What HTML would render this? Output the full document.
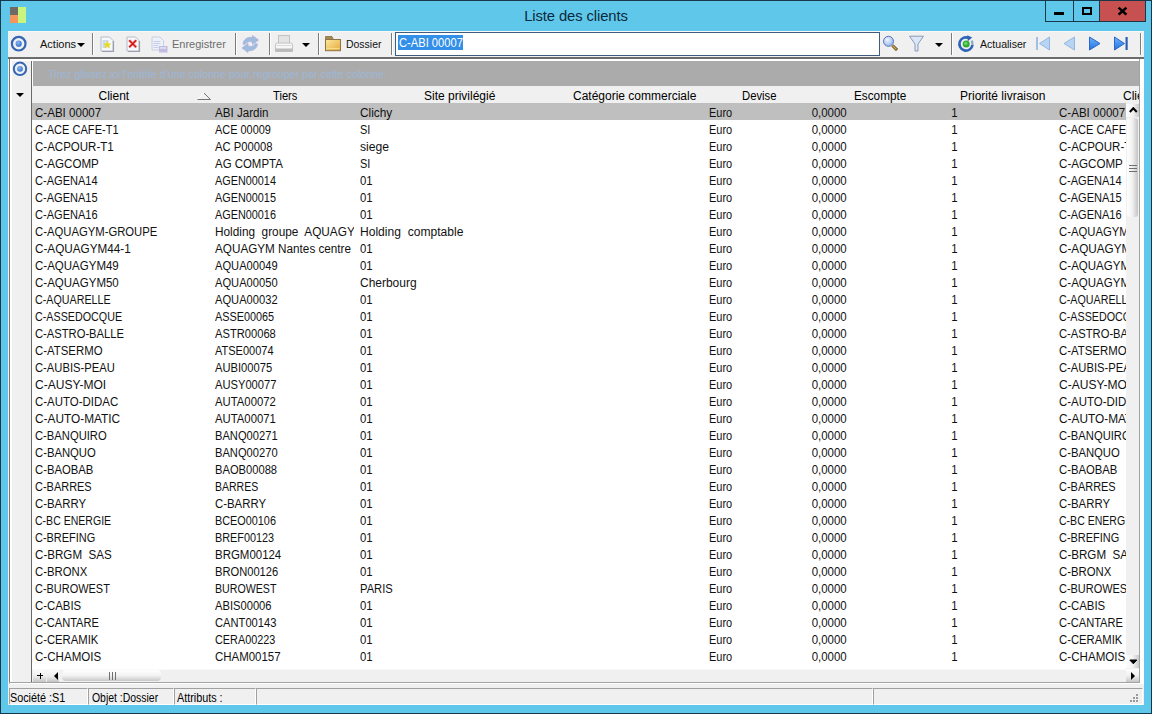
<!DOCTYPE html>
<html><head><meta charset="utf-8"><title>Liste des clients</title>
<style>
*{margin:0;padding:0;box-sizing:border-box}
html,body{width:1152px;height:714px;overflow:hidden}
body{background:#17384b;font-family:"Liberation Sans",sans-serif;position:relative;color:#000}
.abs{position:absolute}
#frame{position:absolute;left:1px;top:1px;width:1150px;height:712px;background:#5fc7ea}
#title{position:absolute;left:0;top:6px;width:1152px;text-align:center;font-size:14.8px;color:#0b2a3b;line-height:20px;letter-spacing:-0.1px}
.tb{position:absolute;top:1px;height:21px;border-left:1px solid #17384b;border-bottom:1px solid #17384b}
#client{position:absolute;left:8px;top:31px;width:1136px;height:674px;background:#f0f0f0}
#toolbar{position:absolute;left:8px;top:31px;width:1136px;height:26px;background:#f0f0f0;border-top:1px solid #f8f8f8}
.sep{position:absolute;top:33px;width:2px;height:22px;background:linear-gradient(90deg,#7c7c7c 50%,#fff 50%)}
.tt{position:absolute;top:36px;font-size:11px;line-height:16px;color:#111;white-space:pre}
.dd{position:absolute;width:0;height:0;border-left:4px solid transparent;border-right:4px solid transparent;border-top:4px solid #000}
#gridbox{position:absolute;left:9px;top:59px;width:1135px;height:625px;border-left:1px solid #777;border-bottom:1px solid #fff;background:#fff}
#leftpan{position:absolute;left:12px;top:61px;width:19px;height:622px;background:#f0f0f0}
#leftline{position:absolute;left:31px;top:61px;width:1px;height:622px;background:#6a6a6a}
#group{position:absolute;left:33px;top:61px;width:1106px;height:25px;background:#ababab}
#grouptext{position:absolute;left:48px;top:66px;font-size:11px;line-height:16px;color:#a0b4ce;white-space:pre;transform:scaleX(.968);transform-origin:left top;letter-spacing:0;text-shadow:0 0 .6px #a4b6cc}
#header{position:absolute;left:32px;top:86px;width:1108px;height:17px;background:#f0f0f0}
.h{position:absolute;top:88px;font-size:12px;line-height:17px;white-space:pre;color:#000}
.row{position:absolute;left:32px;width:1094px;height:17px;background:#fff}
.row.sel{background:#bfbfbf}
.cl{position:absolute;top:0;height:17px;overflow:hidden}
.cl span{position:absolute;left:0;top:2px;font-size:12px;line-height:16px;white-space:pre;color:#111;transform-origin:left top}
.cl span.r{left:auto;right:0;transform-origin:right top}
.clip2{position:absolute;overflow:hidden}
#vscroll{position:absolute;left:1126px;top:103px;width:14px;height:566px;background:#e9e9e9}
#hscroll{position:absolute;left:32px;top:669px;width:1108px;height:14px;background:#e9e9e9}
#status{position:absolute;left:8px;top:687px;width:1136px;height:18px;background:#f0f0f0}
.seg{position:absolute;top:688px;height:17px;border-top:1px solid #a0a0a0;border-left:1px solid #a0a0a0;border-right:1px solid #fff;border-bottom:1px solid #fff}
.st{position:absolute;top:691px;font-size:12px;line-height:15px;color:#000;white-space:pre}

</style></head><body>
<div id="frame"></div>
<!-- app icon -->
<div class="abs" style="left:10px;top:7px;width:8px;height:8px;background:#6f6a66"></div>
<div class="abs" style="left:10px;top:15px;width:8px;height:8px;background:#f5955a"></div>
<div class="abs" style="left:18px;top:7px;width:8px;height:16px;background:#c9f47e"></div>
<div id="title">Liste des clients</div>
<!-- title buttons -->
<div class="tb" style="left:1045px;width:28px;"></div>
<div class="tb" style="left:1073px;width:26px;"></div>
<div class="tb" style="left:1099px;width:47px;background:#c75050;border-right:1px solid #17384b"></div>
<div class="abs" style="left:1054px;top:12px;width:10px;height:3px;background:#000"></div>
<div class="abs" style="left:1082px;top:7px;width:10px;height:8px;border:2px solid #000"></div>
<svg class="abs" style="left:1117px;top:6px" width="11" height="10" viewBox="0 0 11 10"><path d="M1.6 1.6 L9.4 8.6 M9.4 1.6 L1.6 8.6" stroke="#000" stroke-width="2.6"/></svg>

<div id="client"></div>
<div id="toolbar"></div>
<!-- toolbar circle -->
<svg class="abs" style="left:10px;top:35px" width="18" height="18" viewBox="0 0 18 18"><defs><radialGradient id="dg" cx=".4" cy=".35" r=".7"><stop offset="0" stop-color="#8ab8f4"/><stop offset="1" stop-color="#2f6cc8"/></radialGradient></defs><circle cx="8.7" cy="8.7" r="6.8" fill="none" stroke="#3566b4" stroke-width="2.2"/><circle cx="8.7" cy="8.7" r="3.1" fill="url(#dg)"/></svg>
<div class="tt" style="left:40px">Actions</div>
<div class="dd" style="left:77px;top:43px"></div>
<div class="sep" style="left:92px"></div>
<!-- new icon -->
<svg class="abs" style="left:100px;top:36px" width="16" height="17" viewBox="0 0 16 17"><path d="M1 1 H9.5 L13 4.5 V15 H1 Z" fill="#f6f8fc" stroke="#b4bcc8" stroke-width="1"/><path d="M2 15.5 H13.5 V5" fill="none" stroke="#9aa1aa" stroke-width="1.2"/><path d="M2.5 5h6M2.5 7h3M2.5 9h3M2.5 11h3" stroke="#a6bce2" stroke-width="1"/><path d="M7.2 5.2 L8.3 7.6 L10.8 7.9 L8.9 9.6 L9.5 12.1 L7.2 10.8 L4.9 12.1 L5.5 9.6 L3.6 7.9 L6.1 7.6 Z" fill="#e6de1c" stroke="#d8cc30" stroke-width=".4"/></svg>
<!-- delete icon -->
<svg class="abs" style="left:126px;top:36px" width="16" height="17" viewBox="0 0 16 17"><path d="M1 1 H9.5 L13 4.5 V15 H1 Z" fill="#f6f8fc" stroke="#b4bcc8" stroke-width="1"/><path d="M2 15.5 H13.5 V5" fill="none" stroke="#9aa1aa" stroke-width="1.2"/><path d="M3.2 4.2 L10.2 11.2 M10.2 4.2 L3.2 11.2" stroke="#f4a8a8" stroke-width="3"/><path d="M3.2 4.2 L10.2 11.2 M10.2 4.2 L3.2 11.2" stroke="#d41010" stroke-width="1.5"/></svg>
<!-- save icon (disabled) -->
<svg class="abs" style="left:151px;top:36px" width="18" height="17" viewBox="0 0 18 17"><path d="M1 1 H9 L12.5 4.5 V14 H1 Z" fill="#eef1fa" stroke="#c8cde0" stroke-width="1"/><path d="M2.5 5.5h7M2.5 7.5h7M2.5 9.5h5M2.5 11.5h5" stroke="#c6cfea" stroke-width="1"/><rect x="8" y="10" width="8.5" height="6.5" fill="#c0bce2"/><rect x="9" y="11" width="6" height="2" fill="#dcdaf0"/></svg>
<div class="tt" style="left:172px;color:#6d6d6d">Enregistrer</div>
<div class="sep" style="left:235px"></div>
<!-- refresh disabled -->
<svg class="abs" style="left:241px;top:35px" width="19" height="18" viewBox="0 0 19 18"><path d="M2 9 C2.5 4.5 6.5 1.5 11.5 2.5 L11.5 0.5 L17.5 5 L11.5 9.5 L11.5 7 C8 6 5.5 7 4 9.5 Z" fill="#9fbbdd" stroke="#aeb0dc" stroke-width=".8"/><path d="M16.5 9 C16 13.5 12 16.5 7 15.5 L7 17.5 L1 13 L7 8.5 L7 11 C10.5 12 13 11 14.5 8.5 Z" fill="#9fbbdd" stroke="#aeb0dc" stroke-width=".8"/></svg>
<div class="sep" style="left:269px"></div>
<!-- printer disabled -->
<svg class="abs" style="left:274px;top:34px" width="20" height="19" viewBox="0 0 20 19"><rect x="4.5" y="1.5" width="11" height="9" fill="#e4e4e4" stroke="#c2c2c2"/><path d="M1.5 11 Q1.5 9 3.5 9 H16.5 Q18.5 9 18.5 11 V17.5 H1.5 Z" fill="#f7f7f7" stroke="#c2c2c2"/><rect x="1.5" y="14.5" width="17" height="3" fill="#b9b9b9"/><rect x="3" y="11" width="14" height="1" fill="#dadada"/></svg>
<div class="dd" style="left:302px;top:43px"></div>
<div class="sep" style="left:318px"></div>
<!-- folder -->
<svg class="abs" style="left:324px;top:35px" width="18" height="17" viewBox="0 0 18 17"><defs><linearGradient id="fg" x1="0" y1="0" x2="1" y2="1"><stop offset="0" stop-color="#fbe9a0"/><stop offset="1" stop-color="#e6a838"/></linearGradient></defs><path d="M1.5 1.5 H8 L9 3.5 V5 H1.5 Z" fill="#a48a56" stroke="#8a7040" stroke-width=".8"/><rect x="1.5" y="4.5" width="15" height="11.2" fill="url(#fg)" stroke="#8d7343" stroke-width="1"/><path d="M2.5 13.5 H15.5" stroke="#f3dc90" stroke-width="1"/></svg>
<div class="tt" style="left:346px;transform:scaleX(.95);transform-origin:left top">Dossier</div>
<div class="sep" style="left:391px"></div>
<!-- search box -->
<div class="abs" style="left:395px;top:32px;width:485px;height:24px;background:#fff;border:1px solid #3e5d7e"></div>
<div class="abs" style="left:398px;top:35px;width:65px;height:15px;background:#3390e9"></div>
<div class="abs" style="left:399px;top:36px;font-size:12px;line-height:15px;color:#fff;white-space:pre;transform:scaleX(.93);transform-origin:left top">C-ABI 00007</div>
<!-- magnifier -->
<svg class="abs" style="left:882px;top:35px" width="18" height="17" viewBox="0 0 18 17"><defs><radialGradient id="lg" cx=".4" cy=".35" r=".7"><stop offset="0" stop-color="#f0f6ff"/><stop offset="1" stop-color="#90b4ee"/></radialGradient></defs><path d="M10.5 10.5 L15 15" stroke="#4a3a10" stroke-width="3"/><path d="M10.5 10.5 L14.5 14.5" stroke="#d6a84a" stroke-width="1.6"/><circle cx="6.5" cy="6.3" r="5" fill="url(#lg)" stroke="#5a74b4" stroke-width="1"/></svg>
<!-- funnel -->
<svg class="abs" style="left:908px;top:35px" width="17" height="17" viewBox="0 0 17 17"><path d="M1.5 1.2 H15.5 L10 9 V16 H7 V9 Z" fill="#dbe6f8" stroke="#8c9bb6" stroke-width="1"/></svg>
<div class="dd" style="left:935px;top:43px"></div>
<div class="sep" style="left:951px"></div>
<!-- green refresh -->
<svg class="abs" style="left:956px;top:34px" width="20" height="20" viewBox="0 0 20 20"><path d="M12.6 3.9 A6.6 6.6 0 1 0 16.5 11" fill="none" stroke="#2f63b8" stroke-width="2.6"/><path d="M16.5 11 A6.6 6.6 0 0 0 15.6 6.6" fill="none" stroke="#8aa6c8" stroke-width="2.2"/><path d="M11.2 1.2 L16.2 3.6 L11.8 7.2 Z" fill="#2f63b8"/><circle cx="10.2" cy="10" r="3.5" fill="#33aa33"/><circle cx="9.8" cy="9.4" r="1.7" fill="#66d866"/></svg>
<div class="tt" style="left:980px;transform:scaleX(.96);transform-origin:left top">Actualiser</div>
<!-- nav arrows -->
<svg class="abs" style="left:1035px;top:36px" width="16" height="15" viewBox="0 0 16 15"><rect x="1" y="1" width="2" height="13" fill="#9fbfe6"/><path d="M14.5 1 V14 L4.5 7.5 Z" fill="#b8d4f2" stroke="#93b6e2" stroke-width="1"/></svg>
<svg class="abs" style="left:1062px;top:36px" width="14" height="15" viewBox="0 0 14 15"><path d="M12.5 1 V14 L2 7.5 Z" fill="#b8d4f2" stroke="#93b6e2" stroke-width="1"/></svg>
<svg class="abs" style="left:1088px;top:36px" width="14" height="15" viewBox="0 0 14 15"><defs><linearGradient id="ag" x1="0" y1="0" x2="0" y2="1"><stop offset="0" stop-color="#6cb4ff"/><stop offset="1" stop-color="#1f74e0"/></linearGradient></defs><path d="M1.5 1 V14 L12 7.5 Z" fill="url(#ag)" stroke="#2a66c8" stroke-width="1"/></svg>
<svg class="abs" style="left:1113px;top:36px" width="16" height="15" viewBox="0 0 16 15"><path d="M1.5 1 V14 L11.5 7.5 Z" fill="url(#ag)" stroke="#2a66c8" stroke-width="1"/><rect x="12.5" y="1" width="2.2" height="13" fill="#2a5fb8"/></svg>
<div class="sep" style="left:1140px"></div>
<!-- toolbar bottom edge -->
<div class="abs" style="left:8px;top:57px;width:1136px;height:2px;background:#6c6c6c"></div>

<!-- grid -->
<div id="gridbox"></div>
<div id="leftpan"></div>
<div id="leftline"></div>
<svg class="abs" style="left:12px;top:61px" width="16" height="16" viewBox="0 0 16 16"><circle cx="8" cy="7.8" r="6.2" fill="none" stroke="#3566b4" stroke-width="2"/><circle cx="8" cy="7.8" r="2.9" fill="url(#dg)"/></svg>
<div class="dd" style="left:16px;top:93px"></div>
<div id="group"></div>
<div id="grouptext">Tirez glissez ici l'entête d'une colonne pour regrouper par cette colonne.</div>
<div id="header"></div>
<div class="h" style="left:98.5px">Client</div>
<svg class="abs" style="left:196px;top:91px" width="17" height="10" viewBox="0 0 17 10"><path d="M1.5 8.5 L8 2" fill="none" stroke="#fff" stroke-width="1"/><path d="M1.5 8.5 H14.5 L8 2" fill="none" stroke="#747474" stroke-width="1"/></svg>
<div class="h" style="left:273px;transform:scaleX(.93);transform-origin:left top">Tiers</div>
<div class="h" style="left:424px">Site privilégié</div>
<div class="h" style="left:573px">Catégorie commerciale</div>
<div class="h" style="left:742px;transform:scaleX(.94);transform-origin:left top">Devise</div>
<div class="h" style="left:854px;transform:scaleX(.98);transform-origin:left top">Escompte</div>
<div class="h" style="left:960px">Priorité livraison</div>
<div class="clip2" style="left:1100px;top:86px;width:39px;height:17px"><div class="h" style="left:23px;top:2px">Client</div></div>
<div class="clip2" style="left:32px;top:103px;width:1094px;height:566px">
<div style="position:absolute;left:-32px;top:-103px;width:1152px;height:714px">
<div class="row sel" style="top:103px"><div class="cl" style="left:3px;width:176px"><span style="transform:scaleX(0.963)">C-ABI 00007</span></div><div class="cl" style="left:183px;width:139px"><span style="transform:scaleX(0.967)">ABI Jardin</span></div><div class="cl" style="left:328px;width:340px"><span style="transform:scaleX(0.986)">Clichy</span></div><div class="cl" style="left:677px;width:60px"><span style="transform:scaleX(0.915)">Euro</span></div><div class="cl" style="left:700px;width:114.5px"><span class="r" style="transform:scaleX(0.955)">0,0000</span></div><div class="cl" style="left:890px;width:35.5px"><span class="r" style="transform:scaleX(0.949)">1</span></div><div class="cl" style="left:1027px;width:67px"><span style="transform:scaleX(0.963)">C-ABI 00007</span></div></div>
<div class="row" style="top:120px"><div class="cl" style="left:3px;width:176px"><span style="transform:scaleX(0.922)">C-ACE CAFE-T1</span></div><div class="cl" style="left:183px;width:139px"><span style="transform:scaleX(0.91)">ACE 00009</span></div><div class="cl" style="left:328px;width:340px"><span style="transform:scaleX(0.91)">SI</span></div><div class="cl" style="left:677px;width:60px"><span style="transform:scaleX(0.915)">Euro</span></div><div class="cl" style="left:700px;width:114.5px"><span class="r" style="transform:scaleX(0.955)">0,0000</span></div><div class="cl" style="left:890px;width:35.5px"><span class="r" style="transform:scaleX(0.949)">1</span></div><div class="cl" style="left:1027px;width:67px"><span style="transform:scaleX(0.922)">C-ACE CAFE-T1</span></div></div>
<div class="row" style="top:137px"><div class="cl" style="left:3px;width:176px"><span style="transform:scaleX(0.96)">C-ACPOUR-T1</span></div><div class="cl" style="left:183px;width:139px"><span style="transform:scaleX(0.938)">AC P00008</span></div><div class="cl" style="left:328px;width:340px"><span style="transform:scaleX(1.014)">siege</span></div><div class="cl" style="left:677px;width:60px"><span style="transform:scaleX(0.915)">Euro</span></div><div class="cl" style="left:700px;width:114.5px"><span class="r" style="transform:scaleX(0.955)">0,0000</span></div><div class="cl" style="left:890px;width:35.5px"><span class="r" style="transform:scaleX(0.949)">1</span></div><div class="cl" style="left:1027px;width:67px"><span style="transform:scaleX(0.96)">C-ACPOUR-T1</span></div></div>
<div class="row" style="top:154px"><div class="cl" style="left:3px;width:176px"><span style="transform:scaleX(0.967)">C-AGCOMP</span></div><div class="cl" style="left:183px;width:139px"><span style="transform:scaleX(0.953)">AG COMPTA</span></div><div class="cl" style="left:328px;width:340px"><span style="transform:scaleX(0.91)">SI</span></div><div class="cl" style="left:677px;width:60px"><span style="transform:scaleX(0.915)">Euro</span></div><div class="cl" style="left:700px;width:114.5px"><span class="r" style="transform:scaleX(0.955)">0,0000</span></div><div class="cl" style="left:890px;width:35.5px"><span class="r" style="transform:scaleX(0.949)">1</span></div><div class="cl" style="left:1027px;width:67px"><span style="transform:scaleX(0.967)">C-AGCOMP</span></div></div>
<div class="row" style="top:171px"><div class="cl" style="left:3px;width:176px"><span style="transform:scaleX(0.921)">C-AGENA14</span></div><div class="cl" style="left:183px;width:139px"><span style="transform:scaleX(0.904)">AGEN00014</span></div><div class="cl" style="left:328px;width:340px"><span style="transform:scaleX(0.949)">01</span></div><div class="cl" style="left:677px;width:60px"><span style="transform:scaleX(0.915)">Euro</span></div><div class="cl" style="left:700px;width:114.5px"><span class="r" style="transform:scaleX(0.955)">0,0000</span></div><div class="cl" style="left:890px;width:35.5px"><span class="r" style="transform:scaleX(0.949)">1</span></div><div class="cl" style="left:1027px;width:67px"><span style="transform:scaleX(0.921)">C-AGENA14</span></div></div>
<div class="row" style="top:188px"><div class="cl" style="left:3px;width:176px"><span style="transform:scaleX(0.921)">C-AGENA15</span></div><div class="cl" style="left:183px;width:139px"><span style="transform:scaleX(0.904)">AGEN00015</span></div><div class="cl" style="left:328px;width:340px"><span style="transform:scaleX(0.949)">01</span></div><div class="cl" style="left:677px;width:60px"><span style="transform:scaleX(0.915)">Euro</span></div><div class="cl" style="left:700px;width:114.5px"><span class="r" style="transform:scaleX(0.955)">0,0000</span></div><div class="cl" style="left:890px;width:35.5px"><span class="r" style="transform:scaleX(0.949)">1</span></div><div class="cl" style="left:1027px;width:67px"><span style="transform:scaleX(0.921)">C-AGENA15</span></div></div>
<div class="row" style="top:205px"><div class="cl" style="left:3px;width:176px"><span style="transform:scaleX(0.921)">C-AGENA16</span></div><div class="cl" style="left:183px;width:139px"><span style="transform:scaleX(0.904)">AGEN00016</span></div><div class="cl" style="left:328px;width:340px"><span style="transform:scaleX(0.949)">01</span></div><div class="cl" style="left:677px;width:60px"><span style="transform:scaleX(0.915)">Euro</span></div><div class="cl" style="left:700px;width:114.5px"><span class="r" style="transform:scaleX(0.955)">0,0000</span></div><div class="cl" style="left:890px;width:35.5px"><span class="r" style="transform:scaleX(0.949)">1</span></div><div class="cl" style="left:1027px;width:67px"><span style="transform:scaleX(0.921)">C-AGENA16</span></div></div>
<div class="row" style="top:222px"><div class="cl" style="left:3px;width:176px"><span style="transform:scaleX(0.941)">C-AQUAGYM-GROUPE</span></div><div class="cl" style="left:183px;width:139px"><span style="transform:scaleX(0.984)">Holding  groupe  AQUAGYM</span></div><div class="cl" style="left:328px;width:340px"><span style="transform:scaleX(1.006)">Holding  comptable</span></div><div class="cl" style="left:677px;width:60px"><span style="transform:scaleX(0.915)">Euro</span></div><div class="cl" style="left:700px;width:114.5px"><span class="r" style="transform:scaleX(0.955)">0,0000</span></div><div class="cl" style="left:890px;width:35.5px"><span class="r" style="transform:scaleX(0.949)">1</span></div><div class="cl" style="left:1027px;width:67px"><span style="transform:scaleX(0.941)">C-AQUAGYM-GROUPE</span></div></div>
<div class="row" style="top:239px"><div class="cl" style="left:3px;width:176px"><span style="transform:scaleX(0.976)">C-AQUAGYM44-1</span></div><div class="cl" style="left:183px;width:139px"><span style="transform:scaleX(0.976)">AQUAGYM Nantes centre</span></div><div class="cl" style="left:328px;width:340px"><span style="transform:scaleX(0.949)">01</span></div><div class="cl" style="left:677px;width:60px"><span style="transform:scaleX(0.915)">Euro</span></div><div class="cl" style="left:700px;width:114.5px"><span class="r" style="transform:scaleX(0.955)">0,0000</span></div><div class="cl" style="left:890px;width:35.5px"><span class="r" style="transform:scaleX(0.949)">1</span></div><div class="cl" style="left:1027px;width:67px"><span style="transform:scaleX(0.976)">C-AQUAGYM44-1</span></div></div>
<div class="row" style="top:256px"><div class="cl" style="left:3px;width:176px"><span style="transform:scaleX(0.959)">C-AQUAGYM49</span></div><div class="cl" style="left:183px;width:139px"><span style="transform:scaleX(0.929)">AQUA00049</span></div><div class="cl" style="left:328px;width:340px"><span style="transform:scaleX(0.949)">01</span></div><div class="cl" style="left:677px;width:60px"><span style="transform:scaleX(0.915)">Euro</span></div><div class="cl" style="left:700px;width:114.5px"><span class="r" style="transform:scaleX(0.955)">0,0000</span></div><div class="cl" style="left:890px;width:35.5px"><span class="r" style="transform:scaleX(0.949)">1</span></div><div class="cl" style="left:1027px;width:67px"><span style="transform:scaleX(0.959)">C-AQUAGYM49</span></div></div>
<div class="row" style="top:273px"><div class="cl" style="left:3px;width:176px"><span style="transform:scaleX(0.959)">C-AQUAGYM50</span></div><div class="cl" style="left:183px;width:139px"><span style="transform:scaleX(0.929)">AQUA00050</span></div><div class="cl" style="left:328px;width:340px"><span style="transform:scaleX(0.998)">Cherbourg</span></div><div class="cl" style="left:677px;width:60px"><span style="transform:scaleX(0.915)">Euro</span></div><div class="cl" style="left:700px;width:114.5px"><span class="r" style="transform:scaleX(0.955)">0,0000</span></div><div class="cl" style="left:890px;width:35.5px"><span class="r" style="transform:scaleX(0.949)">1</span></div><div class="cl" style="left:1027px;width:67px"><span style="transform:scaleX(0.959)">C-AQUAGYM50</span></div></div>
<div class="row" style="top:290px"><div class="cl" style="left:3px;width:176px"><span style="transform:scaleX(0.893)">C-AQUARELLE</span></div><div class="cl" style="left:183px;width:139px"><span style="transform:scaleX(0.929)">AQUA00032</span></div><div class="cl" style="left:328px;width:340px"><span style="transform:scaleX(0.949)">01</span></div><div class="cl" style="left:677px;width:60px"><span style="transform:scaleX(0.915)">Euro</span></div><div class="cl" style="left:700px;width:114.5px"><span class="r" style="transform:scaleX(0.955)">0,0000</span></div><div class="cl" style="left:890px;width:35.5px"><span class="r" style="transform:scaleX(0.949)">1</span></div><div class="cl" style="left:1027px;width:67px"><span style="transform:scaleX(0.893)">C-AQUARELLE</span></div></div>
<div class="row" style="top:307px"><div class="cl" style="left:3px;width:176px"><span style="transform:scaleX(0.895)">C-ASSEDOCQUE</span></div><div class="cl" style="left:183px;width:139px"><span style="transform:scaleX(0.904)">ASSE00065</span></div><div class="cl" style="left:328px;width:340px"><span style="transform:scaleX(0.949)">01</span></div><div class="cl" style="left:677px;width:60px"><span style="transform:scaleX(0.915)">Euro</span></div><div class="cl" style="left:700px;width:114.5px"><span class="r" style="transform:scaleX(0.955)">0,0000</span></div><div class="cl" style="left:890px;width:35.5px"><span class="r" style="transform:scaleX(0.949)">1</span></div><div class="cl" style="left:1027px;width:67px"><span style="transform:scaleX(0.895)">C-ASSEDOCQUE</span></div></div>
<div class="row" style="top:324px"><div class="cl" style="left:3px;width:176px"><span style="transform:scaleX(0.933)">C-ASTRO-BALLE</span></div><div class="cl" style="left:183px;width:139px"><span style="transform:scaleX(0.93)">ASTR00068</span></div><div class="cl" style="left:328px;width:340px"><span style="transform:scaleX(0.949)">01</span></div><div class="cl" style="left:677px;width:60px"><span style="transform:scaleX(0.915)">Euro</span></div><div class="cl" style="left:700px;width:114.5px"><span class="r" style="transform:scaleX(0.955)">0,0000</span></div><div class="cl" style="left:890px;width:35.5px"><span class="r" style="transform:scaleX(0.949)">1</span></div><div class="cl" style="left:1027px;width:67px"><span style="transform:scaleX(0.933)">C-ASTRO-BALLE</span></div></div>
<div class="row" style="top:341px"><div class="cl" style="left:3px;width:176px"><span style="transform:scaleX(0.95)">C-ATSERMO</span></div><div class="cl" style="left:183px;width:139px"><span style="transform:scaleX(0.917)">ATSE00074</span></div><div class="cl" style="left:328px;width:340px"><span style="transform:scaleX(0.949)">01</span></div><div class="cl" style="left:677px;width:60px"><span style="transform:scaleX(0.915)">Euro</span></div><div class="cl" style="left:700px;width:114.5px"><span class="r" style="transform:scaleX(0.955)">0,0000</span></div><div class="cl" style="left:890px;width:35.5px"><span class="r" style="transform:scaleX(0.949)">1</span></div><div class="cl" style="left:1027px;width:67px"><span style="transform:scaleX(0.95)">C-ATSERMO</span></div></div>
<div class="row" style="top:358px"><div class="cl" style="left:3px;width:176px"><span style="transform:scaleX(0.935)">C-AUBIS-PEAU</span></div><div class="cl" style="left:183px;width:139px"><span style="transform:scaleX(0.931)">AUBI00075</span></div><div class="cl" style="left:328px;width:340px"><span style="transform:scaleX(0.949)">01</span></div><div class="cl" style="left:677px;width:60px"><span style="transform:scaleX(0.915)">Euro</span></div><div class="cl" style="left:700px;width:114.5px"><span class="r" style="transform:scaleX(0.955)">0,0000</span></div><div class="cl" style="left:890px;width:35.5px"><span class="r" style="transform:scaleX(0.949)">1</span></div><div class="cl" style="left:1027px;width:67px"><span style="transform:scaleX(0.935)">C-AUBIS-PEAU</span></div></div>
<div class="row" style="top:375px"><div class="cl" style="left:3px;width:176px"><span style="transform:scaleX(1.004)">C-AUSY-MOI</span></div><div class="cl" style="left:183px;width:139px"><span style="transform:scaleX(0.93)">AUSY00077</span></div><div class="cl" style="left:328px;width:340px"><span style="transform:scaleX(0.949)">01</span></div><div class="cl" style="left:677px;width:60px"><span style="transform:scaleX(0.915)">Euro</span></div><div class="cl" style="left:700px;width:114.5px"><span class="r" style="transform:scaleX(0.955)">0,0000</span></div><div class="cl" style="left:890px;width:35.5px"><span class="r" style="transform:scaleX(0.949)">1</span></div><div class="cl" style="left:1027px;width:67px"><span style="transform:scaleX(1.004)">C-AUSY-MOI</span></div></div>
<div class="row" style="top:392px"><div class="cl" style="left:3px;width:176px"><span style="transform:scaleX(0.956)">C-AUTO-DIDAC</span></div><div class="cl" style="left:183px;width:139px"><span style="transform:scaleX(0.943)">AUTA00072</span></div><div class="cl" style="left:328px;width:340px"><span style="transform:scaleX(0.949)">01</span></div><div class="cl" style="left:677px;width:60px"><span style="transform:scaleX(0.915)">Euro</span></div><div class="cl" style="left:700px;width:114.5px"><span class="r" style="transform:scaleX(0.955)">0,0000</span></div><div class="cl" style="left:890px;width:35.5px"><span class="r" style="transform:scaleX(0.949)">1</span></div><div class="cl" style="left:1027px;width:67px"><span style="transform:scaleX(0.956)">C-AUTO-DIDAC</span></div></div>
<div class="row" style="top:409px"><div class="cl" style="left:3px;width:176px"><span style="transform:scaleX(0.987)">C-AUTO-MATIC</span></div><div class="cl" style="left:183px;width:139px"><span style="transform:scaleX(0.943)">AUTA00071</span></div><div class="cl" style="left:328px;width:340px"><span style="transform:scaleX(0.949)">01</span></div><div class="cl" style="left:677px;width:60px"><span style="transform:scaleX(0.915)">Euro</span></div><div class="cl" style="left:700px;width:114.5px"><span class="r" style="transform:scaleX(0.955)">0,0000</span></div><div class="cl" style="left:890px;width:35.5px"><span class="r" style="transform:scaleX(0.949)">1</span></div><div class="cl" style="left:1027px;width:67px"><span style="transform:scaleX(0.987)">C-AUTO-MATIC</span></div></div>
<div class="row" style="top:426px"><div class="cl" style="left:3px;width:176px"><span style="transform:scaleX(0.935)">C-BANQUIRO</span></div><div class="cl" style="left:183px;width:139px"><span style="transform:scaleX(0.929)">BANQ00271</span></div><div class="cl" style="left:328px;width:340px"><span style="transform:scaleX(0.949)">01</span></div><div class="cl" style="left:677px;width:60px"><span style="transform:scaleX(0.915)">Euro</span></div><div class="cl" style="left:700px;width:114.5px"><span class="r" style="transform:scaleX(0.955)">0,0000</span></div><div class="cl" style="left:890px;width:35.5px"><span class="r" style="transform:scaleX(0.949)">1</span></div><div class="cl" style="left:1027px;width:67px"><span style="transform:scaleX(0.935)">C-BANQUIRO</span></div></div>
<div class="row" style="top:443px"><div class="cl" style="left:3px;width:176px"><span style="transform:scaleX(0.94)">C-BANQUO</span></div><div class="cl" style="left:183px;width:139px"><span style="transform:scaleX(0.929)">BANQ00270</span></div><div class="cl" style="left:328px;width:340px"><span style="transform:scaleX(0.949)">01</span></div><div class="cl" style="left:677px;width:60px"><span style="transform:scaleX(0.915)">Euro</span></div><div class="cl" style="left:700px;width:114.5px"><span class="r" style="transform:scaleX(0.955)">0,0000</span></div><div class="cl" style="left:890px;width:35.5px"><span class="r" style="transform:scaleX(0.949)">1</span></div><div class="cl" style="left:1027px;width:67px"><span style="transform:scaleX(0.94)">C-BANQUO</span></div></div>
<div class="row" style="top:460px"><div class="cl" style="left:3px;width:176px"><span style="transform:scaleX(0.941)">C-BAOBAB</span></div><div class="cl" style="left:183px;width:139px"><span style="transform:scaleX(0.93)">BAOB00088</span></div><div class="cl" style="left:328px;width:340px"><span style="transform:scaleX(0.949)">01</span></div><div class="cl" style="left:677px;width:60px"><span style="transform:scaleX(0.915)">Euro</span></div><div class="cl" style="left:700px;width:114.5px"><span class="r" style="transform:scaleX(0.955)">0,0000</span></div><div class="cl" style="left:890px;width:35.5px"><span class="r" style="transform:scaleX(0.949)">1</span></div><div class="cl" style="left:1027px;width:67px"><span style="transform:scaleX(0.941)">C-BAOBAB</span></div></div>
<div class="row" style="top:477px"><div class="cl" style="left:3px;width:176px"><span style="transform:scaleX(0.914)">C-BARRES</span></div><div class="cl" style="left:183px;width:139px"><span style="transform:scaleX(0.876)">BARRES</span></div><div class="cl" style="left:328px;width:340px"><span style="transform:scaleX(0.949)">01</span></div><div class="cl" style="left:677px;width:60px"><span style="transform:scaleX(0.915)">Euro</span></div><div class="cl" style="left:700px;width:114.5px"><span class="r" style="transform:scaleX(0.955)">0,0000</span></div><div class="cl" style="left:890px;width:35.5px"><span class="r" style="transform:scaleX(0.949)">1</span></div><div class="cl" style="left:1027px;width:67px"><span style="transform:scaleX(0.914)">C-BARRES</span></div></div>
<div class="row" style="top:494px"><div class="cl" style="left:3px;width:176px"><span style="transform:scaleX(0.949)">C-BARRY</span></div><div class="cl" style="left:183px;width:139px"><span style="transform:scaleX(0.949)">C-BARRY</span></div><div class="cl" style="left:328px;width:340px"><span style="transform:scaleX(0.949)">01</span></div><div class="cl" style="left:677px;width:60px"><span style="transform:scaleX(0.915)">Euro</span></div><div class="cl" style="left:700px;width:114.5px"><span class="r" style="transform:scaleX(0.955)">0,0000</span></div><div class="cl" style="left:890px;width:35.5px"><span class="r" style="transform:scaleX(0.949)">1</span></div><div class="cl" style="left:1027px;width:67px"><span style="transform:scaleX(0.949)">C-BARRY</span></div></div>
<div class="row" style="top:511px"><div class="cl" style="left:3px;width:176px"><span style="transform:scaleX(0.878)">C-BC ENERGIE</span></div><div class="cl" style="left:183px;width:139px"><span style="transform:scaleX(0.904)">BCEO00106</span></div><div class="cl" style="left:328px;width:340px"><span style="transform:scaleX(0.949)">01</span></div><div class="cl" style="left:677px;width:60px"><span style="transform:scaleX(0.915)">Euro</span></div><div class="cl" style="left:700px;width:114.5px"><span class="r" style="transform:scaleX(0.955)">0,0000</span></div><div class="cl" style="left:890px;width:35.5px"><span class="r" style="transform:scaleX(0.949)">1</span></div><div class="cl" style="left:1027px;width:67px"><span style="transform:scaleX(0.878)">C-BC ENERGIE</span></div></div>
<div class="row" style="top:528px"><div class="cl" style="left:3px;width:176px"><span style="transform:scaleX(0.913)">C-BREFING</span></div><div class="cl" style="left:183px;width:139px"><span style="transform:scaleX(0.904)">BREF00123</span></div><div class="cl" style="left:328px;width:340px"><span style="transform:scaleX(0.949)">01</span></div><div class="cl" style="left:677px;width:60px"><span style="transform:scaleX(0.915)">Euro</span></div><div class="cl" style="left:700px;width:114.5px"><span class="r" style="transform:scaleX(0.955)">0,0000</span></div><div class="cl" style="left:890px;width:35.5px"><span class="r" style="transform:scaleX(0.949)">1</span></div><div class="cl" style="left:1027px;width:67px"><span style="transform:scaleX(0.913)">C-BREFING</span></div></div>
<div class="row" style="top:545px"><div class="cl" style="left:3px;width:176px"><span style="transform:scaleX(0.967)">C-BRGM  SAS</span></div><div class="cl" style="left:183px;width:139px"><span style="transform:scaleX(0.955)">BRGM00124</span></div><div class="cl" style="left:328px;width:340px"><span style="transform:scaleX(0.949)">01</span></div><div class="cl" style="left:677px;width:60px"><span style="transform:scaleX(0.915)">Euro</span></div><div class="cl" style="left:700px;width:114.5px"><span class="r" style="transform:scaleX(0.955)">0,0000</span></div><div class="cl" style="left:890px;width:35.5px"><span class="r" style="transform:scaleX(0.949)">1</span></div><div class="cl" style="left:1027px;width:67px"><span style="transform:scaleX(0.967)">C-BRGM  SAS</span></div></div>
<div class="row" style="top:562px"><div class="cl" style="left:3px;width:176px"><span style="transform:scaleX(0.945)">C-BRONX</span></div><div class="cl" style="left:183px;width:139px"><span style="transform:scaleX(0.929)">BRON00126</span></div><div class="cl" style="left:328px;width:340px"><span style="transform:scaleX(0.949)">01</span></div><div class="cl" style="left:677px;width:60px"><span style="transform:scaleX(0.915)">Euro</span></div><div class="cl" style="left:700px;width:114.5px"><span class="r" style="transform:scaleX(0.955)">0,0000</span></div><div class="cl" style="left:890px;width:35.5px"><span class="r" style="transform:scaleX(0.949)">1</span></div><div class="cl" style="left:1027px;width:67px"><span style="transform:scaleX(0.945)">C-BRONX</span></div></div>
<div class="row" style="top:579px"><div class="cl" style="left:3px;width:176px"><span style="transform:scaleX(0.913)">C-BUROWEST</span></div><div class="cl" style="left:183px;width:139px"><span style="transform:scaleX(0.886)">BUROWEST</span></div><div class="cl" style="left:328px;width:340px"><span style="transform:scaleX(0.933)">PARIS</span></div><div class="cl" style="left:677px;width:60px"><span style="transform:scaleX(0.915)">Euro</span></div><div class="cl" style="left:700px;width:114.5px"><span class="r" style="transform:scaleX(0.955)">0,0000</span></div><div class="cl" style="left:890px;width:35.5px"><span class="r" style="transform:scaleX(0.949)">1</span></div><div class="cl" style="left:1027px;width:67px"><span style="transform:scaleX(0.913)">C-BUROWEST</span></div></div>
<div class="row" style="top:596px"><div class="cl" style="left:3px;width:176px"><span style="transform:scaleX(0.949)">C-CABIS</span></div><div class="cl" style="left:183px;width:139px"><span style="transform:scaleX(0.931)">ABIS00006</span></div><div class="cl" style="left:328px;width:340px"><span style="transform:scaleX(0.949)">01</span></div><div class="cl" style="left:677px;width:60px"><span style="transform:scaleX(0.915)">Euro</span></div><div class="cl" style="left:700px;width:114.5px"><span class="r" style="transform:scaleX(0.955)">0,0000</span></div><div class="cl" style="left:890px;width:35.5px"><span class="r" style="transform:scaleX(0.949)">1</span></div><div class="cl" style="left:1027px;width:67px"><span style="transform:scaleX(0.949)">C-CABIS</span></div></div>
<div class="row" style="top:613px"><div class="cl" style="left:3px;width:176px"><span style="transform:scaleX(0.925)">C-CANTARE</span></div><div class="cl" style="left:183px;width:139px"><span style="transform:scaleX(0.93)">CANT00143</span></div><div class="cl" style="left:328px;width:340px"><span style="transform:scaleX(0.949)">01</span></div><div class="cl" style="left:677px;width:60px"><span style="transform:scaleX(0.915)">Euro</span></div><div class="cl" style="left:700px;width:114.5px"><span class="r" style="transform:scaleX(0.955)">0,0000</span></div><div class="cl" style="left:890px;width:35.5px"><span class="r" style="transform:scaleX(0.949)">1</span></div><div class="cl" style="left:1027px;width:67px"><span style="transform:scaleX(0.925)">C-CANTARE</span></div></div>
<div class="row" style="top:630px"><div class="cl" style="left:3px;width:176px"><span style="transform:scaleX(0.94)">C-CERAMIK</span></div><div class="cl" style="left:183px;width:139px"><span style="transform:scaleX(0.904)">CERA00223</span></div><div class="cl" style="left:328px;width:340px"><span style="transform:scaleX(0.949)">01</span></div><div class="cl" style="left:677px;width:60px"><span style="transform:scaleX(0.915)">Euro</span></div><div class="cl" style="left:700px;width:114.5px"><span class="r" style="transform:scaleX(0.955)">0,0000</span></div><div class="cl" style="left:890px;width:35.5px"><span class="r" style="transform:scaleX(0.949)">1</span></div><div class="cl" style="left:1027px;width:67px"><span style="transform:scaleX(0.94)">C-CERAMIK</span></div></div>
<div class="row" style="top:647px"><div class="cl" style="left:3px;width:176px"><span style="transform:scaleX(0.964)">C-CHAMOIS</span></div><div class="cl" style="left:183px;width:139px"><span style="transform:scaleX(0.955)">CHAM00157</span></div><div class="cl" style="left:328px;width:340px"><span style="transform:scaleX(0.949)">01</span></div><div class="cl" style="left:677px;width:60px"><span style="transform:scaleX(0.915)">Euro</span></div><div class="cl" style="left:700px;width:114.5px"><span class="r" style="transform:scaleX(0.955)">0,0000</span></div><div class="cl" style="left:890px;width:35.5px"><span class="r" style="transform:scaleX(0.949)">1</span></div><div class="cl" style="left:1027px;width:67px"><span style="transform:scaleX(0.964)">C-CHAMOIS</span></div></div>
</div></div>
<!-- vertical scrollbar -->
<div class="abs" style="left:1126px;top:103px;width:13px;height:566px;background:#f0f0f0"></div>
<div class="abs" style="left:1139px;top:59px;width:1px;height:624px;background:#a3a3a3"></div>
<div class="abs" style="left:1126px;top:104px;width:13px;height:13px;background:linear-gradient(90deg,#fdfdfd 0%,#f4f4f4 50%,#c9c9c9 100%)"></div>
<svg class="abs" style="left:1129px;top:107px" width="9" height="6" viewBox="0 0 9 6"><path d="M0.8 5 L4.3 1.2 L7.8 5" fill="none" stroke="#000" stroke-width="2"/></svg>
<div class="abs" style="left:1127px;top:118px;width:11px;height:99px;background:linear-gradient(90deg,#fefefe 0%,#f3f3f3 45%,#c4c4c4 100%);border-radius:3px"></div>
<div class="abs" style="left:1129px;top:165px;width:8px;height:1px;background:#6f6f6f"></div>
<div class="abs" style="left:1129px;top:168px;width:8px;height:1px;background:#6f6f6f"></div>
<div class="abs" style="left:1129px;top:171px;width:8px;height:1px;background:#6f6f6f"></div>
<div class="abs" style="left:1126px;top:655px;width:13px;height:13px;background:linear-gradient(90deg,#fdfdfd 0%,#f4f4f4 50%,#c9c9c9 100%)"></div>
<svg class="abs" style="left:1129px;top:659px" width="9" height="6" viewBox="0 0 9 6"><path d="M0.8 1 L4.3 4.8 L7.8 1 Z" fill="#000" stroke="#000" stroke-width="1"/></svg>
<!-- horizontal scrollbar -->
<div class="abs" style="left:32px;top:669px;width:1107px;height:14px;background:#f0f0f0;border-top:1px solid #fafafa"></div>
<div class="abs" style="left:33px;top:670px;width:13px;height:12px;background:linear-gradient(180deg,#fafafa 0%,#eeeeee 50%,#c4c4c4 100%)"></div>
<div class="abs" style="left:37px;top:675px;width:6px;height:1px;background:#000"></div>
<div class="abs" style="left:39.5px;top:672.5px;width:1px;height:6px;background:#000"></div>
<div class="abs" style="left:47px;top:670px;width:12px;height:12px;background:linear-gradient(180deg,#fafafa 0%,#eeeeee 50%,#c4c4c4 100%)"></div>
<div class="abs" style="left:54px;top:671.5px;width:0;height:0;border-top:4px solid transparent;border-bottom:4px solid transparent;border-right:4px solid #000"></div>
<div class="abs" style="left:62px;top:670px;width:99px;height:11px;background:linear-gradient(180deg,#fefefe 0%,#f2f2f2 50%,#c8c8c8 100%);border-radius:4px"></div>
<div class="abs" style="left:109px;top:672px;width:1px;height:8px;background:#6f6f6f"></div>
<div class="abs" style="left:112px;top:672px;width:1px;height:8px;background:#6f6f6f"></div>
<div class="abs" style="left:115px;top:672px;width:1px;height:8px;background:#6f6f6f"></div>
<div class="abs" style="left:1126px;top:669px;width:13px;height:13px;background:linear-gradient(180deg,#fdfdfd 0%,#f0f0f0 50%,#c6c6c6 100%)"></div>
<div class="abs" style="left:1131px;top:671.5px;width:0;height:0;border-top:4px solid transparent;border-bottom:4px solid transparent;border-left:4px solid #000"></div>
<div class="abs" style="left:9px;top:682px;width:1131px;height:1px;background:#a3a3a3"></div>

<!-- status bar -->
<div id="status"></div>
<div class="seg" style="left:9px;width:79px"></div>
<div class="seg" style="left:88px;width:86px"></div>
<div class="seg" style="left:174px;width:82px"></div>
<div class="seg" style="left:256px;width:617px"></div>
<div class="seg" style="left:873px;width:270px"></div>
<div class="st" style="left:10px;transform:scaleX(.9);transform-origin:left top">Société :S1</div>
<div class="st" style="left:92px;transform:scaleX(.87);transform-origin:left top">Objet :Dossier</div>
<div class="st" style="left:176.5px;transform:scaleX(.9);transform-origin:left top">Attributs :</div>
<svg class="abs" style="left:1128px;top:693px" width="12" height="11" viewBox="0 0 12 11"><g fill="#9a9a9a"><rect x="8" y="1" width="2" height="2"/><rect x="5" y="4" width="2" height="2"/><rect x="8" y="4" width="2" height="2"/><rect x="2" y="7" width="2" height="2"/><rect x="5" y="7" width="2" height="2"/><rect x="8" y="7" width="2" height="2"/></g></svg>

</body></html>
